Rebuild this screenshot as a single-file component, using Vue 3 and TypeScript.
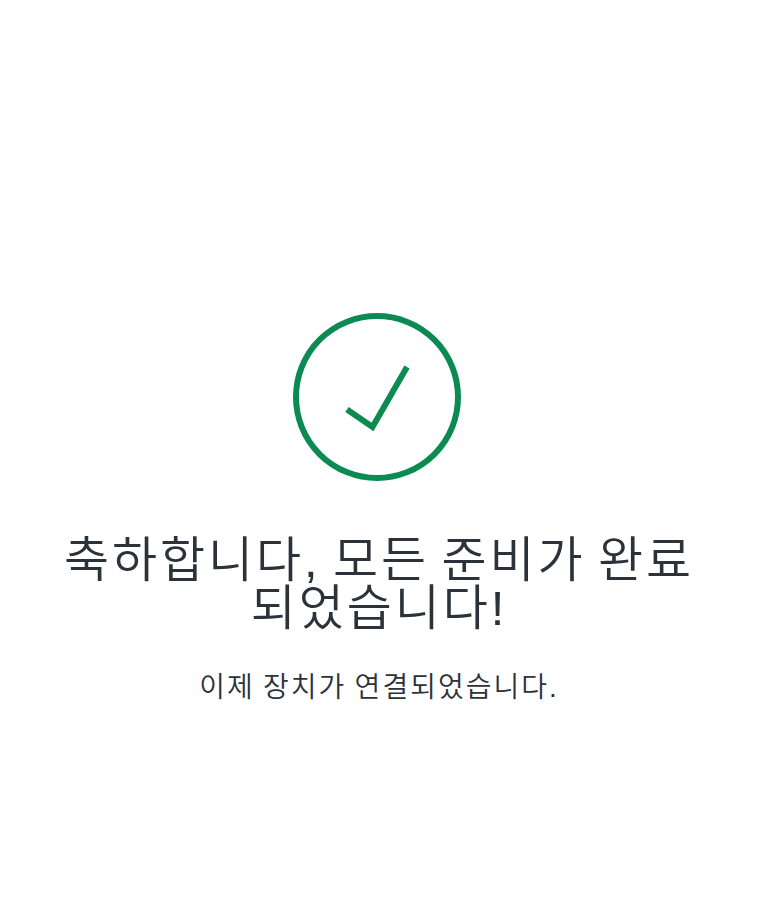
<script setup lang="ts">
const title: string[] = ['축하합니다, 모든 준비가 완료', '되었습니다!']
const message: string = '이제 장치가 연결되었습니다.'
</script>

<template>
  <main class="page">
    <svg class="icon" viewBox="0 0 168 168" aria-hidden="true">
      <circle cx="84" cy="84" r="81" />
      <path d="M54 96.5 79.5 114 114 54" />
    </svg>
    <h1 class="title">
      <span v-for="line in title" :key="line" class="line">{{ line }}</span>
    </h1>
    <p class="message">{{ message }}</p>
  </main>
</template>

<style>
body {
  background: #fff;
}
</style>

<style scoped>
.page {
  display: flex;
  flex-direction: column;
  align-items: center;
  box-sizing: border-box;
  width: 758px;
  height: 899px;
  padding-top: 313px;
  color: #2b323a;
  font-family: "Liberation Sans", "Noto Sans CJK KR", sans-serif;
  font-weight: 350;
}
.icon {
  flex: none;
  width: 168px;
  height: 168px;
  margin-right: 4px;
  fill: none;
  stroke: #0b8a52;
  stroke-width: 6;
}
.title {
  margin: 55px 0 0;
  font-size: 49px;
  font-weight: 350;
  line-height: 48px;
  text-align: center;
  letter-spacing: 2.9px;
  word-spacing: -4px;
}
.line {
  display: block;
  white-space: nowrap;
}
.message {
  margin: 38px 0 0;
  font-size: 28px;
  line-height: 36px;
  letter-spacing: 2px;
  word-spacing: -1.5px;
  white-space: nowrap;
}
</style>
